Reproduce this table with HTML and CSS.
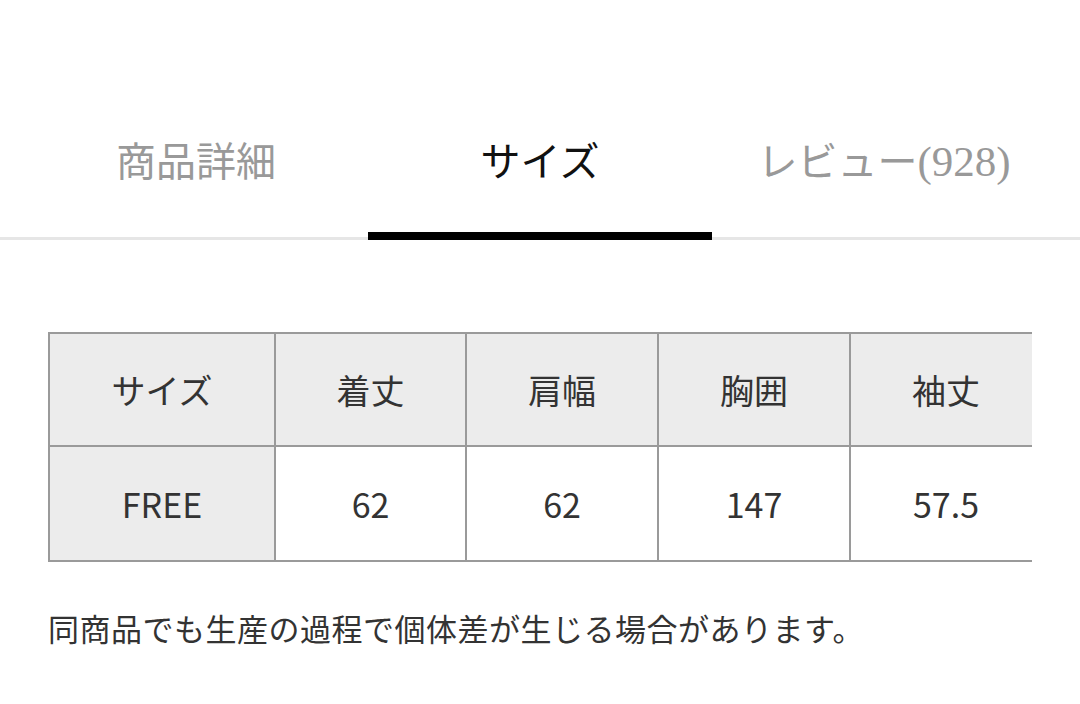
FILE: index.html
```html
<!DOCTYPE html>
<html lang="ja">
<head>
<meta charset="utf-8">
<title>サイズ</title>
<link rel="stylesheet" href="styles.css">
</head>
<body>
<nav class="tabs">
  <div class="tab">商品詳細</div>
  <div class="tab tab-active">サイズ</div>
  <div class="tab tab-review">レビュー<span class="count">(928)</span></div>
</nav>
<main class="content">
  <div class="table-wrap">
    <table class="size-table">
      <thead>
        <tr>
          <th class="c1">サイズ</th>
          <th class="c2">着丈</th>
          <th class="c3">肩幅</th>
          <th class="c3">胸囲</th>
          <th class="c3">袖丈</th>
        </tr>
      </thead>
      <tbody>
        <tr>
          <th class="rowhead">FREE</th>
          <td>62</td>
          <td>62</td>
          <td>147</td>
          <td>57.5</td>
        </tr>
      </tbody>
    </table>
  </div>
  <p class="note">同商品でも生産の過程で個体差が生じる場合があります。</p>
</main>
</body>
</html>
```

FILE: styles.css
```css
html, body {
  margin: 0;
  padding: 0;
  background: #ffffff;
}

body {
  font-family: "Noto Sans CJK JP", "Noto Sans", sans-serif;
  color: #333333;
  width: 1080px;
  height: 704px;
  overflow: hidden;
}

.tabs {
  display: flex;
  align-items: flex-start;
  padding: 0 24px;
  border-bottom: 3px solid #e6e6e6;
  height: 237px;
}

.tab {
  flex: 0 0 344px;
  box-sizing: border-box;
  padding-top: 135px;
  padding-bottom: 49px;
  height: 240px;
  margin-bottom: -3px;
  line-height: 48px;
  font-size: 40px;
  text-align: center;
  color: #999999;
  border-bottom: 8px solid transparent;
  white-space: nowrap;
}

.tab-active {
  color: #111111;
  border-bottom-color: #000000;
}

.tab-review .count {
  font-family: "Liberation Serif", serif;
  font-size: 43px;
  line-height: 48px;
}

.content {
  padding: 92px 48px 0;
}

.table-wrap {
  overflow: hidden;
  width: 984px;
}

.size-table {
  border-collapse: separate;
  border-spacing: 0;
  table-layout: fixed;
  width: 995px;
  border-left: 2px solid #9a9a9a;
  border-top: 2px solid #9a9a9a;
}

.size-table th,
.size-table td {
  box-sizing: border-box;
  border-right: 2px solid #9a9a9a;
  border-bottom: 2px solid #9a9a9a;
  text-align: center;
  vertical-align: middle;
  font-weight: 400;
  font-size: 34px;
  color: #333333;
  padding: 0;
}

.size-table thead th {
  background: #ececec;
  height: 113px;
}

.size-table tbody th,
.size-table tbody td {
  height: 115px;
}

.size-table .c1 { width: 226px; }
.size-table .c2 { width: 191px; }
.size-table .c3 { width: 192px; }

.size-table .rowhead {
  background: #ececec;
}

.size-table td {
  background: #ffffff;
}

.note {
  margin: 46px 0 0;
  font-size: 31px;
  letter-spacing: 0.5px;
  line-height: 40px;
  color: #333333;
  white-space: nowrap;
}
```
